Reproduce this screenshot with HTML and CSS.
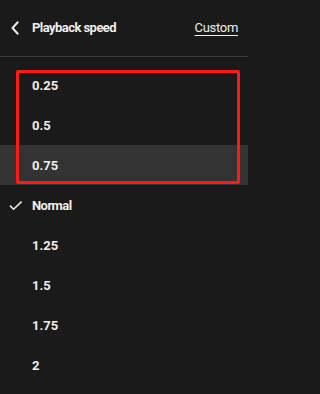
FILE: index.html
```html
<!DOCTYPE html>
<html lang="en">
<head>
<meta charset="utf-8">
<title>Playback speed</title>
<link rel="stylesheet" href="styles.css">
</head>
<body>
<div class="panel">
  <div class="header">
    <span class="back">
      <svg width="10" height="14" viewBox="0 0 10 14"><path d="M7.5 1.5 L2.5 7 L7.5 12.5" fill="none" stroke="#eeeeee" stroke-width="2" stroke-linecap="square"/></svg>
    </span>
    <span class="title">Playback speed</span>
    <span class="custom">Custom</span>
  </div>
  <div class="list">
    <div class="row"><span class="mark"></span><span class="label">0.25</span></div>
    <div class="row"><span class="mark"></span><span class="label">0.5</span></div>
    <div class="row hover"><span class="mark"></span><span class="label">0.75</span></div>
    <div class="row"><span class="mark"><svg width="14" height="10" viewBox="0 0 14 10"><path d="M1 4.6 L4.6 8.2 L12.6 0.6" fill="none" stroke="#eeeeee" stroke-width="1.5"/></svg></span><span class="label word">Normal</span></div>
    <div class="row"><span class="mark"></span><span class="label">1.25</span></div>
    <div class="row"><span class="mark"></span><span class="label">1.5</span></div>
    <div class="row"><span class="mark"></span><span class="label">1.75</span></div>
    <div class="row"><span class="mark"></span><span class="label">2</span></div>
    <div class="highlight-box"></div>
  </div>
</div>
</body>
</html>
```

FILE: styles.css
```css
html, body {
  margin: 0;
  padding: 0;
  background: #1a1a1a;
}
body {
  width: 248px;
  height: 394px;
  overflow: hidden;
  font-family: Roboto, "Liberation Sans", Arial, sans-serif;
  color: #eeeeee;
}
.panel {
  display: flex;
  flex-direction: column;
}
.header {
  display: flex;
  align-items: center;
  padding: 0 10px 0 10px;
  border-bottom: 1px solid #3d3d3d;
  box-sizing: border-box;
  height: 57px;
}
.back {
  width: 22px;
  display: flex;
  align-items: center;
  justify-content: flex-start;
  margin-top: -1px;
}
.title {
  flex: 1;
  font-size: 13px;
  font-weight: 700;
  letter-spacing: -0.55px;
  margin-top: -2px;
}
.custom {
  font-size: 13px;
  font-weight: 400;
  letter-spacing: -0.3px;
  text-decoration: underline;
  text-underline-offset: 3px;
  margin-top: -2px;
}
.list {
  position: relative;
  padding-top: 8px;
}
.row {
  height: 40px;
  display: flex;
  align-items: center;
}
.row.hover {
  background: #333333;
}
.mark {
  width: 32px;
  display: flex;
  justify-content: flex-start;
  padding-left: 9px;
  box-sizing: border-box;
  margin-top: 1px;
}
.label {
  font-size: 13px;
  font-weight: 700;
}
.label.word {
  letter-spacing: -0.55px;
}
.highlight-box {
  position: absolute;
  left: 16px;
  top: 13px;
  width: 224px;
  height: 114px;
  box-sizing: border-box;
  border: 3px solid #ff1a1a;
  border-radius: 2px;
}
```
